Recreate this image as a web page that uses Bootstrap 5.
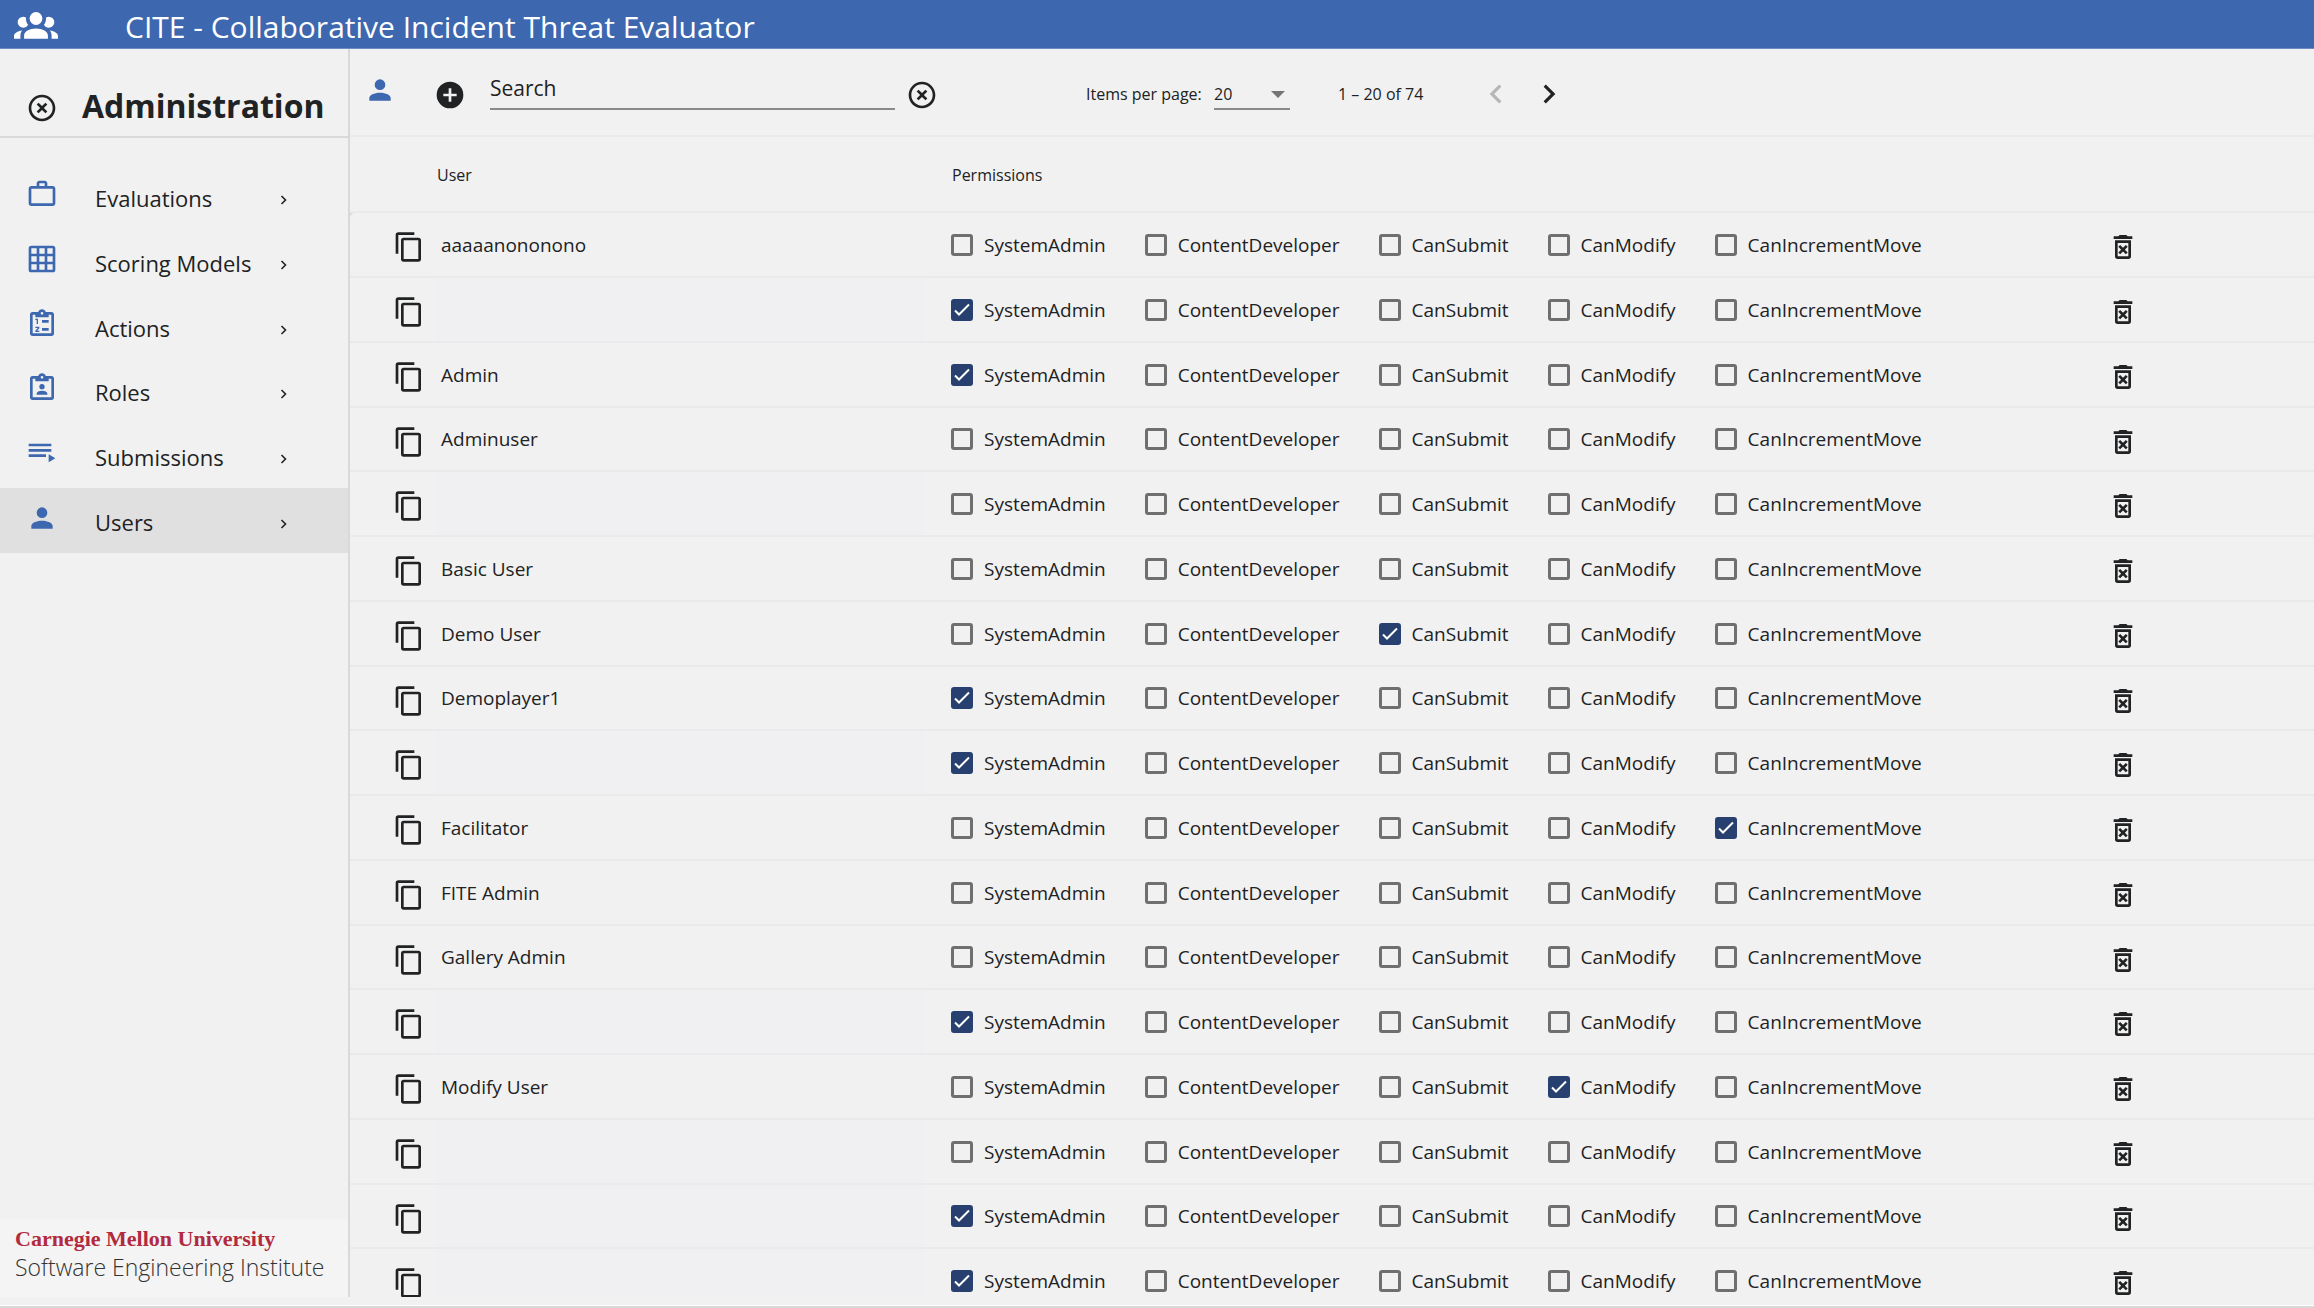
<!DOCTYPE html>
<html lang="en">
<head>
<meta charset="utf-8">
<meta name="viewport" content="width=device-width, initial-scale=1">
<title>CITE - Administration</title>
<link href="https://cdn.jsdelivr.net/npm/bootstrap@5.3.0/dist/css/bootstrap.min.css" rel="stylesheet">
<style>
  :root { --cite-blue: #3d67af; --cite-navy: #27406f; --cite-ink: #212223; --cite-line: #d9d9d9; --cite-soft: #eaeaea; --cite-page: #f1f1f1; }
  body { font-family: "Open Sans", sans-serif; font-size: 19px; line-height: 26px; color: var(--cite-ink); background: var(--cite-page); }
  button { color: inherit; }
  svg { display: block; fill: currentColor; flex: none; }
  .ico { width: 32px; height: 32px; }
  .plain { border: 0; background: none; padding: 0; flex: none; }

  .topbar { height: 49px; flex: none; background: var(--cite-blue); border-bottom: 1px solid #6c8cc3; padding-left: 14px; gap: 67px; }
  .topbar .ico { width: 44px; height: 44px; }
  .topbar h1 { font-size: 30px; line-height: 40px; font-weight: 400; padding-top: 6px; }

  .shell { min-height: 0; overflow: hidden; }
  .side { width: 350px; flex: none; border-right: 2px solid var(--cite-line); }
  .side-head { height: 89px; flex: none; border-bottom: 2px solid var(--cite-line); padding: 30px 0 0 26px; gap: 24px; }
  .side-head h2 { font-size: 32px; line-height: 40px; font-weight: 700; padding-bottom: 4px; }
  .side-nav { padding-top: 26px; }
  .side-nav a { height: 65px; padding-left: 26px; color: inherit; text-decoration: none; font-size: 22px; }
  .side-nav a:nth-child(4n) { height: 64px; }
  .side-nav a.current { background: #e0e0e0; }
  .side-nav .ico { color: var(--cite-blue); margin-bottom: 6px; }
  .side-nav .go { width: 8px; height: 10px; margin-top: 6px; }
  .nav-text { width: 185px; margin-left: 37px; padding-top: 2px; white-space: nowrap; }
  .brand { background: #f4f4f4; height: 78px; padding: 5px 0 0 15px; }
  .brand-cmu { font-family: "Liberation Serif", serif; font-weight: 700; font-size: 22px; line-height: 29px; color: #b22a40; }
  .brand-sei { font-size: 23px; line-height: 28px; color: #333; font-weight: 300; }

  .tools { height: 88px; border-bottom: 2px solid var(--cite-soft); padding-left: 14px; }
  .tool-user { color: var(--cite-blue); margin-bottom: 4px; }
  .tool-add { margin: 6px 24px 0 38px; }
  .tool-clear { margin: 6px 148px 0 11px; }
  .search-box { width: 405px; height: 36px; border: 0; border-bottom: 2px solid #8a8a8a; background: none; font-size: 21px; color: inherit; padding: 0 0 6px; border-radius: 0; outline: 0; }
  .search-box::placeholder { color: inherit; opacity: 1; }
  .pager { font-size: 16px; line-height: 24px; margin-top: 4px; }
  .pager label { width: 128px; }
  .page-size { appearance: none; width: 76px; height: 32px; border: 0; border-bottom: 2px solid #8a8a8a; background: none; color: inherit; font-size: 16px; padding: 2px 0 0; border-radius: 0; }
  .caret { width: 14px; height: 7px; color: #757575; margin-left: -19px; pointer-events: none; }
  .range { width: 139px; margin-left: 53px; }
  .step svg { width: 38px; height: 38px; }
  .step:disabled { color: #b6b6b6; }
  .step + .step { margin-left: 15px; }

  .user-head, .user-row { display: grid; align-items: center; }
  .user-head { grid-template-columns: 87px 515px 1fr; height: 76px; padding-top: 2px; border-bottom: 2px solid var(--cite-soft); font-size: 16px; line-height: 24px; }
  .user-list { background: var(--cite-line); }
  .user-row { grid-template-columns: 91px 510px 1156px 1fr; height: 65px; border-bottom: 2px solid var(--cite-soft); background: var(--cite-page); }
  .user-row:first-child { border-top-left-radius: 5px; }
  .user-row:nth-child(4n) { height: 64px; }
  .user-row .plain { padding-top: 5px; }
  .user-row .copy { padding-left: 43px; }
  .no-name { background: #f0f0f3; align-self: stretch; margin: 0 27px 0 -6px; }
  .perm { gap: 11px; margin-right: 39px; }
  .perm input { appearance: none; width: 22px; height: 22px; border: 3px solid #6f6f6f; border-radius: 3px; margin: 0; }
  .perm input:checked { border-color: var(--cite-navy); background: var(--cite-navy) url("data:image/svg+xml,%3Csvg xmlns='http://www.w3.org/2000/svg' viewBox='0 0 16 16'%3E%3Cpath d='M1 8.5l4 4L15 2.5' fill='none' stroke='%23fff' stroke-width='2'/%3E%3C/svg%3E") center / 16px no-repeat; }
  .foot { height: 11px; flex: none; border-bottom: 2px solid var(--cite-line); box-shadow: inset 0 -1px #fff; }
</style>
</head>
<body class="vh-100 d-flex flex-column overflow-hidden">
<svg class="d-none" xmlns="http://www.w3.org/2000/svg">
  <symbol id="i-group" viewBox="0 0 24 24"><path d="M12,5.5A3.5,3.5 0 0,1 15.5,9A3.5,3.5 0 0,1 12,12.5A3.5,3.5 0 0,1 8.5,9A3.5,3.5 0 0,1 12,5.5M5,8C5.56,8 6.08,8.15 6.53,8.42C6.38,9.85 6.8,11.27 7.66,12.38C7.16,13.34 6.16,14 5,14A3,3 0 0,1 2,11A3,3 0 0,1 5,8M19,8A3,3 0 0,1 22,11A3,3 0 0,1 19,14C17.84,14 16.84,13.34 16.34,12.38C17.2,11.27 17.62,9.85 17.47,8.42C17.92,8.15 18.44,8 19,8M5.5,18.25C5.5,16.18 8.41,14.5 12,14.5C15.59,14.5 18.5,16.18 18.5,18.25V20H5.5V18.25M0,20V18.5C0,17.11 1.89,15.94 4.45,15.6C3.86,16.28 3.5,17.22 3.5,18.25V20H0M24,20H20.5V18.25C20.5,17.22 20.14,16.28 19.55,15.6C22.11,15.94 24,17.11 24,18.5V20Z"/></symbol>
  <symbol id="i-close" viewBox="0 0 24 24"><path d="M12,20C7.59,20 4,16.41 4,12C4,7.59 7.59,4 12,4C16.41,4 20,7.59 20,12C20,16.41 16.41,20 12,20M12,2C6.47,2 2,6.47 2,12C2,17.53 6.47,22 12,22C17.53,22 22,17.53 22,12C22,6.47 17.53,2 12,2M14.59,8L12,10.59L9.41,8L8,9.41L10.59,12L8,14.59L9.41,16L12,13.41L14.59,16L16,14.59L13.41,12L16,9.41L14.59,8Z"/></symbol>
  <symbol id="i-plus" viewBox="0 0 24 24"><path d="M17,13H13V17H11V13H7V11H11V7H13V11H17M12,2A10,10 0 0,0 2,12A10,10 0 0,0 12,22A10,10 0 0,0 22,12A10,10 0 0,0 12,2Z"/></symbol>
  <symbol id="i-user" viewBox="0 0 24 24"><path d="M12,4A4,4 0 0,1 16,8A4,4 0 0,1 12,12A4,4 0 0,1 8,8A4,4 0 0,1 12,4M12,14C16.42,14 20,15.79 20,18V20H4V18C4,15.79 7.58,14 12,14Z"/></symbol>
  <symbol id="i-case" viewBox="0 0 24 24"><path d="M20,6C21.1,6 22,6.9 22,8V19C22,20.1 21.1,21 20,21H4C2.9,21 2,20.1 2,19V8C2,6.9 2.9,6 4,6H8V4C8,2.9 8.9,2 10,2H14C15.1,2 16,2.9 16,4V6H20M4,8V19H20V8H4M14,6V4H10V6H14Z"/></symbol>
  <symbol id="i-grid" viewBox="0 0 24 24"><path fill-rule="evenodd" d="M4,2H20A2,2 0 0,1 22,4V20A2,2 0 0,1 20,22H4A2,2 0 0,1 2,20V4A2,2 0 0,1 4,2M4,4V8H8V4H4M10,4V8H14V4H10M16,4V8H20V4H16M4,10V14H8V10H4M10,10V14H14V10H10M16,10V14H20V10H16M4,16V20H8V16H4M10,16V20H14V16H10M16,16V20H20V16H16Z"/></symbol>
  <symbol id="i-clip" viewBox="0 0 24 24"><path fill-rule="evenodd" d="M19,3H14.82C14.4,1.84 13.3,1 12,1C10.7,1 9.6,1.84 9.18,3H5A2,2 0 0,0 3,5V19A2,2 0 0,0 5,21H19A2,2 0 0,0 21,19V5A2,2 0 0,0 19,3M12,3A1,1 0 0,1 13,4A1,1 0 0,1 12,5A1,1 0 0,1 11,4A1,1 0 0,1 12,3M7,7H17V5H19V19H5V5H7V7Z"/></symbol>
  <symbol id="i-actions" viewBox="0 0 24 24"><use href="#i-clip"/><path d="M12 9h5v2h-5zM12 15h5v2h-5zM8 12V9H7V8h2v4zM7 14h3v1.2L8.3 17H10v1H7v-1l1.8-2H7z"/></symbol>
  <symbol id="i-roles" viewBox="0 0 24 24"><use href="#i-clip"/><path d="M12,9A2,2 0 0,1 14,11A2,2 0 0,1 12,13A2,2 0 0,1 10,11A2,2 0 0,1 12,9M8,17V16C8,14.9 9.8,14 12,14C14.2,14 16,14.9 16,16V17Z"/></symbol>
  <symbol id="i-list" viewBox="0 0 24 24"><path d="M19,9H2V11H19V9M19,5H2V7H19V5M2,15H15V13H2V15M17,13V19L22,16L17,13Z"/></symbol>
  <symbol id="i-copy" viewBox="0 0 24 24"><path d="M19,21H8V7H19M19,5H8A2,2 0 0,0 6,7V21A2,2 0 0,0 8,23H19A2,2 0 0,0 21,21V7A2,2 0 0,0 19,5M16,1H4A2,2 0 0,0 2,3V17H4V3H16V1Z"/></symbol>
  <symbol id="i-trash" viewBox="0 0 24 24"><path d="M14.12,10.47L12,12.59L9.87,10.47L8.46,11.88L10.59,14L8.47,16.12L9.88,17.53L12,15.41L14.12,17.53L15.53,16.12L13.41,14L15.53,11.88L14.12,10.47M15.5,4L14.5,3H9.5L8.5,4H5V6H19V4H15.5M6,19A2,2 0 0,0 8,21H16A2,2 0 0,0 18,19V7H6V19M8,9H16V19H8V9Z"/></symbol>
  <symbol id="i-prev" viewBox="0 0 24 24"><path d="M15.41,7.41L14,6l-6,6 6,6 1.41,-1.41L10.83,12z"/></symbol>
  <symbol id="i-next" viewBox="0 0 24 24"><path d="M10,6L8.59,7.41 13.17,12l-4.58,4.59L10,18l6,-6z"/></symbol>
  <symbol id="i-go" viewBox="0 0 8 10"><path d="M1.5 1L5.5 5L1.5 9" fill="none" stroke="currentColor" stroke-width="1.6"/></symbol>
</svg>

<header class="topbar d-flex align-items-center text-white">
  <svg class="ico"><use href="#i-group"/></svg>
  <h1 class="m-0">CITE - Collaborative Incident Threat Evaluator</h1>
</header>

<div class="shell d-flex flex-grow-1">
  <aside class="side d-flex flex-column">
    <div class="side-head d-flex align-items-center">
      <button class="plain" type="button" aria-label="Close administration"><svg class="ico"><use href="#i-close"/></svg></button>
      <h2 class="m-0">Administration</h2>
    </div>
    <nav class="side-nav d-flex flex-column" id="menu"></nav>
    <div class="brand mt-auto">
      <div class="brand-cmu">Carnegie Mellon University</div>
      <div class="brand-sei">Software Engineering Institute</div>
    </div>
  </aside>

  <main class="flex-grow-1 overflow-hidden">
    <div class="tools d-flex align-items-center">
      <svg class="ico tool-user"><use href="#i-user"/></svg>
      <button class="plain tool-add" type="button" aria-label="Add user"><svg class="ico"><use href="#i-plus"/></svg></button>
      <input class="search-box" type="text" placeholder="Search" aria-label="Search">
      <button class="plain tool-clear" type="button" aria-label="Clear search"><svg class="ico"><use href="#i-close"/></svg></button>
      <div class="pager d-flex align-items-center">
        <label for="size">Items per page:</label>
        <select class="page-size" id="size"><option>20</option><option>50</option></select>
        <svg class="caret" viewBox="0 0 14 7"><path d="M0 0H14L7 7Z"/></svg>
        <span class="range">1 – 20 of 74</span>
        <button class="plain step" type="button" aria-label="Previous page" disabled><svg><use href="#i-prev"/></svg></button>
        <button class="plain step" type="button" aria-label="Next page"><svg><use href="#i-next"/></svg></button>
      </div>
    </div>
    <div class="user-head"><span></span><span>User</span><span>Permissions</span></div>
    <div class="user-list" id="users"></div>
  </main>
</div>
<footer class="foot"></footer>

<script src="https://cdn.jsdelivr.net/npm/bootstrap@5.3.0/dist/js/bootstrap.bundle.min.js"></script>
<script>
  const menu = [['Evaluations', 'case'], ['Scoring Models', 'grid'], ['Actions', 'actions'], ['Roles', 'roles'], ['Submissions', 'list'], ['Users', 'user']];
  document.getElementById('menu').innerHTML = menu.map(([text, icon]) =>
    `<a href="#" class="d-flex align-items-center${text === 'Users' ? ' current' : ''}">
      <svg class="ico"><use href="#i-${icon}"/></svg><span class="nav-text">${text}</span>
      <svg class="go"><use href="#i-go"/></svg></a>`).join('');

  const perms = ['SystemAdmin', 'ContentDeveloper', 'CanSubmit', 'CanModify', 'CanIncrementMove'];
  // each user: name, index of the granted permission (-1 for none)
  const users = [['aaaaanononono', -1], ['', 0], ['Admin', 0], ['Adminuser', -1], ['', -1], ['Basic User', -1],
    ['Demo User', 2], ['Demoplayer1', 0], ['', 0], ['Facilitator', 4], ['FITE Admin', -1], ['Gallery Admin', -1],
    ['', 0], ['Modify User', 3], ['', -1], ['', 0], ['', 0]];
  document.getElementById('users').innerHTML = users.map(([name, granted]) =>
    `<div class="user-row">
      <button class="plain copy" type="button" aria-label="Copy user id"><svg class="ico"><use href="#i-copy"/></svg></button>
      ${name ? `<span class="user-name">${name}</span>` : '<span class="no-name"></span>'}
      <div class="d-flex">${perms.map((p, i) =>
        `<label class="perm d-flex align-items-center"><input type="checkbox"${i === granted ? ' checked' : ''}>${p}</label>`).join('')}</div>
      <button class="plain bin" type="button" aria-label="Delete user"><svg class="ico"><use href="#i-trash"/></svg></button>
    </div>`).join('');
</script>
</body>
</html>
